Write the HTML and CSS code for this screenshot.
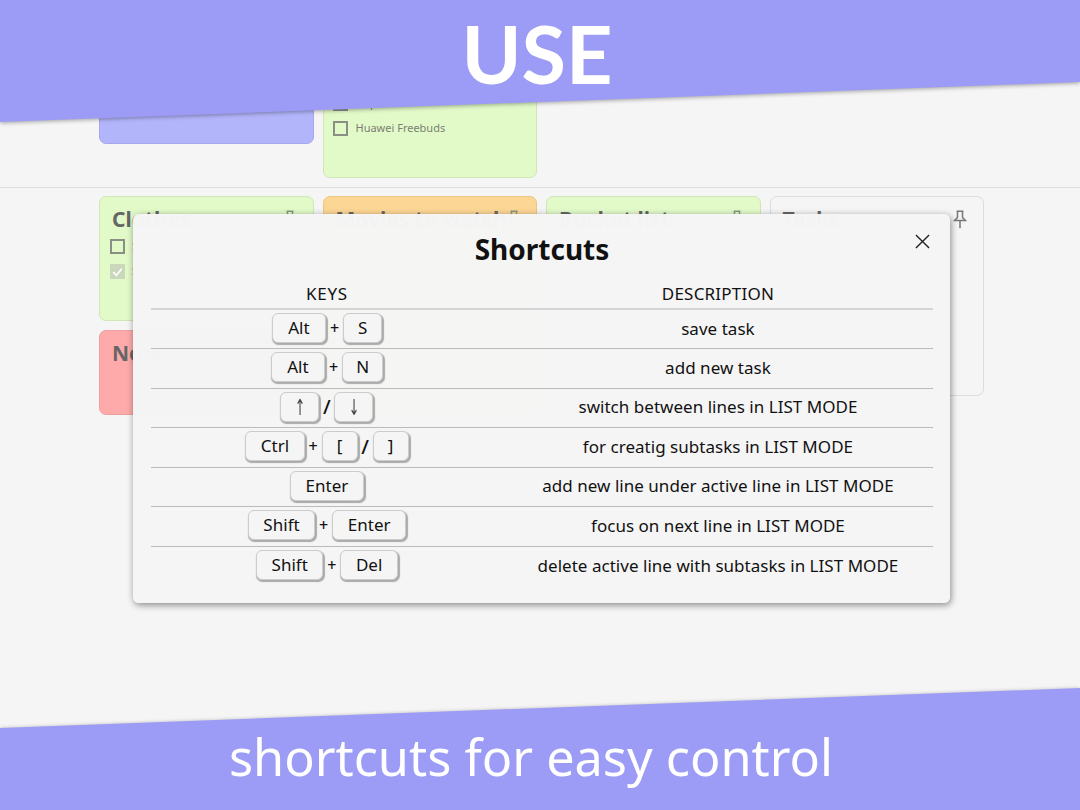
FILE: index.html
```html
<!DOCTYPE html>
<html lang="en">
<head>
<meta charset="utf-8">
<title>Shortcuts</title>
<link rel="stylesheet" href="styles.css">
</head>
<body>
<svg class="defs" width="0" height="0" aria-hidden="true"><defs>
  <symbol id="pin" viewBox="0 0 14 19"><path d="M3.5 1.2h7M4.5 1.2v6.3L1.5 10.6h11L9.5 7.5V1.2M7 10.6v7.6" fill="none" stroke="currentColor" stroke-width="1.5"/></symbol>
</defs></svg>
<main class="board">
  <section class="row row-top">
    <article class="card purple short"></article>
    <article class="card green tall">
      <label class="item"><span class="box"></span>Airpods</label>
      <label class="item"><span class="box"></span>Huawei Freebuds</label>
    </article>
  </section>
  <section class="row row-main">
    <div class="col">
      <article class="card green clothes">
        <header class="card-head"><h2>Clothes</h2><svg class="pin"><use href="#pin"/></svg></header>
        <label class="item big"><span class="box"></span>Socks</label>
        <label class="item big"><span class="box checked"><svg viewBox="0 0 14 14"><path d="M3 7.5l3 3 5-6" fill="none" stroke="#fff" stroke-width="1.6"/></svg></span>Shirt</label>
      </article>
      <article class="card red notes"><header class="card-head"><h2>Notes</h2></header></article>
    </div>
    <article class="card orange movies">
      <header class="card-head"><h2>Movies to watch</h2><svg class="pin"><use href="#pin"/></svg></header>
      <div class="item big sub later"><span class="box"></span></div>
      <div class="item big sub"><span class="box"></span></div>
    </article>
    <article class="card green bucket">
      <header class="card-head"><h2>Bucket list</h2><svg class="pin"><use href="#pin"/></svg></header>
    </article>
    <article class="card plain tasks">
      <header class="card-head"><h2>Tasks</h2><svg class="pin dark"><use href="#pin"/></svg></header>
      <div class="item big later"><span class="box"></span></div>
      <div class="item big sub"><span class="box"></span></div>
    </article>
  </section>
</main>

<div class="banner banner-top"><div class="banner-shape"></div><span class="banner-text">USE</span></div>
<div class="banner banner-bottom"><div class="banner-shape"></div><span class="banner-text">shortcuts for easy control</span></div>

<div class="modal" role="dialog" aria-label="Shortcuts">
  <svg class="close" viewBox="0 0 16 16"><path d="M1 1l14 14M15 1L1 15" fill="none" stroke="#222" stroke-width="1.5"/></svg>
  <h1>Shortcuts</h1>
  <table>
    <thead><tr><th class="c-keys">KEYS</th><th class="c-desc">DESCRIPTION</th></tr></thead>
    <tbody>
      <tr><td><div class="combo"><kbd class="alt">Alt</kbd><span class="op">+</span><kbd class="single">S</kbd></div></td><td>save task</td></tr>
      <tr><td><div class="combo"><kbd class="alt">Alt</kbd><span class="op">+</span><kbd class="single">N</kbd></div></td><td>add new task</td></tr>
      <tr><td><div class="combo"><kbd class="arrow"><span class="glyph">↑</span></kbd><span class="op slash">/</span><kbd class="arrow"><span class="glyph">↓</span></kbd></div></td><td>switch between lines in LIST MODE</td></tr>
      <tr><td><div class="combo"><kbd>Ctrl</kbd><span class="op">+</span><kbd class="br">[</kbd><span class="op slash">/</span><kbd class="br">]</kbd></div></td><td>for creatig subtasks in LIST MODE</td></tr>
      <tr><td><div class="combo"><kbd>Enter</kbd></div></td><td>add new line under active line in LIST MODE</td></tr>
      <tr><td><div class="combo"><kbd>Shift</kbd><span class="op">+</span><kbd>Enter</kbd></div></td><td>focus on next line in LIST MODE</td></tr>
      <tr><td><div class="combo"><kbd>Shift</kbd><span class="op">+</span><kbd>Del</kbd></div></td><td>delete active line with subtasks in LIST MODE</td></tr>
    </tbody>
  </table>
</div>
</body>
</html>
```
FILE: styles.css
```css
* { box-sizing: border-box; }
html, body { margin: 0; height: 100%; }
body {
  width: 1080px; height: 810px; overflow: hidden; position: relative;
  background: #f5f5f5; color: #111;
  font-family: "Noto Sans", "Open Sans", sans-serif;
}
.defs { position: absolute; }
.board { display: flex; flex-direction: column; }
.row { display: grid; grid-template-columns: repeat(4, 214.5px); column-gap: 9px; padding-left: 99px; align-items: start; }
.row-top { height: 188px; padding-top: 60px; border-bottom: 1px solid #ddd; }
.row-main { padding-top: 8px; }
.col { display: flex; flex-direction: column; gap: 9px; }
.card { border-radius: 7px; border: 1px solid; padding: 11px 12px; }
.purple { background: #b3b5fb; border-color: #a6a8ee; }
.green { background: #e2fac8; border-color: #cfe6b6; }
.orange { background: #fcd694; border-color: #eec581; }
.red { background: #ffaaaa; border-color: #eea0a0; }
.plain { background: #f5f5f5; border-color: #ddd; }
.short { height: 84px; }
.tall { height: 118px; padding-top: 34px; display: flex; flex-direction: column; gap: 9px; padding-left: 9px; }
.tall .item { gap: 8px; }
.clothes { height: 125px; }
.notes { height: 85px; }
.movies, .bucket { height: 220px; }
.tasks { height: 200px; }
.card-head { display: flex; justify-content: space-between; align-items: flex-start; height: 30px; }
.card-head h2 { margin: 0; font-size: 21px; line-height: 22px; font-weight: 700; color: #666; white-space: nowrap; }
.pin { width: 14px; height: 19px; color: #8a9a80; margin: 2px 4px 0 0; flex: none; }
.pin.dark { color: #777; }
.item { display: flex; align-items: center; gap: 7px; font-size: 11px; line-height: 16px; color: #7a8072; }
.item.big { margin: 0 0 9px -2px; }
.item.sub { padding-left: 18px; }
.item.later { margin-top: 25px; }
.box { width: 15px; height: 15px; border: 2px solid #8a8f86; flex: none; display: block; }
.box.checked { background: #c9d8bb; border: 0; }
.box.checked svg { display: block; }

.banner { position: absolute; left: 0; width: 1080px; display: flex; justify-content: center; }
.banner-shape { position: absolute; inset: 0; filter: drop-shadow(0 1px 2px rgba(0,0,0,.35)); }
.banner-shape::before { content: ""; display: block; height: 100%; background: #9c9cf6; }
.banner-text { position: relative; color: #fff; white-space: nowrap; }
.banner-top { top: 0; height: 123px; padding-top: 8px; }
.banner-top .banner-shape::before { clip-path: polygon(0 0, 100% 0, 100% 82px, 0 122px); }
.banner-top .banner-text { font-family: Lato, "Noto Sans", sans-serif; font-size: 81px; line-height: 90px; height: 90px; font-weight: 700; margin-left: -6px; }
.banner-bottom { top: 688px; height: 122px; }
.banner-bottom .banner-shape::before { clip-path: polygon(0 40px, 100% 0, 100% 100%, 0 100%); }
.banner-bottom .banner-text { font-size: 50.4px; line-height: 138px; margin-left: -18px; }

.modal {
  position: absolute; left: 133px; top: 214px; width: 817px; height: 389px;
  background: rgba(245,245,245,.99); border-radius: 6px; padding: 0 17px 0 18px;
  box-shadow: 1px 2px 7px rgba(0,0,0,.45);
}
.close { position: absolute; left: 782px; top: 20px; width: 15px; height: 15px; }
.modal h1 { margin: 0; padding-top: 15px; height: 70px; font-size: 28px; line-height: 40px; font-weight: 700; text-align: center; }
table { width: 782px; border-collapse: collapse; table-layout: fixed; font-size: 17px; letter-spacing: .03px; }
th, td { padding: 0; text-align: center; font-weight: 400; height: 39.5px; }
td { padding-bottom: 2px; }
th { height: 24px; line-height: 20px; padding-bottom: 4px; letter-spacing: .2px; }
th.c-keys { width: 45%; letter-spacing: .8px; }
thead tr { border-bottom: 2px solid #d4d4d4; }
tbody tr + tr { border-top: 1px solid #bbb; }
.combo { display: flex; justify-content: center; align-items: center; gap: 3px; }
kbd {
  font: inherit; font-size: 17px; line-height: 28px; height: 30px; min-width: 39px; padding: 0 14.5px;
  border: 1px solid #ccc; border-radius: 6px; background: #f5f5f5; box-shadow: 1px 1.5px 1px .5px #aaa;
  text-align: center; display: block;
}
kbd.alt { padding: 0 15.5px; }
kbd.single { padding: 0 13px; }
kbd.arrow { width: 39px; padding: 0; font-family: "DejaVu Sans", sans-serif; font-size: 17px; color: #444; }
.glyph { display: inline-block; transform: scale(.75, 1.3); }
kbd.br { min-width: 36px; padding: 0 12px; }
.op { font-size: 16px; font-weight: 500; width: 11px; }
.op.slash { font-size: 20px; width: 9px; }
```
